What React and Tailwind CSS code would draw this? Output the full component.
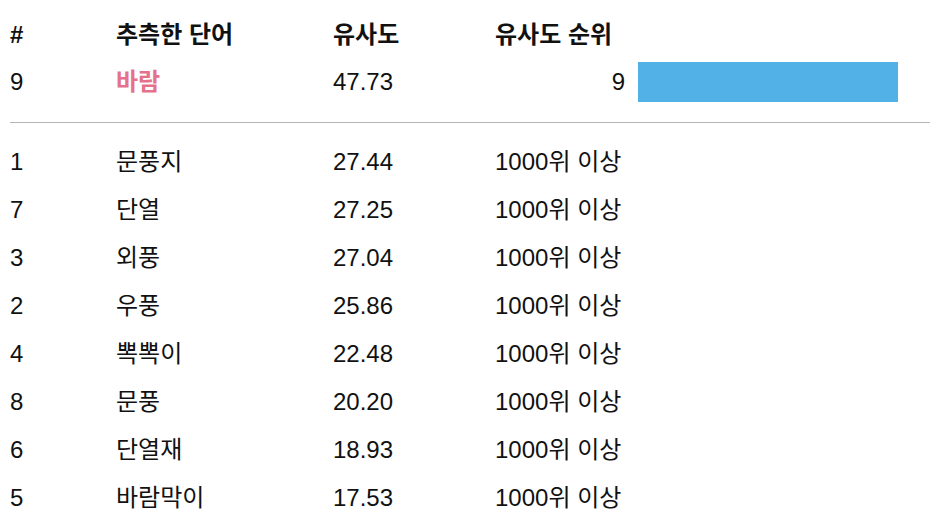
import React from 'react';

const guesses = [
  { id: 1, word: '문풍지', sim: '27.44', rank: '1000위 이상' },
  { id: 7, word: '단열', sim: '27.25', rank: '1000위 이상' },
  { id: 3, word: '외풍', sim: '27.04', rank: '1000위 이상' },
  { id: 2, word: '우풍', sim: '25.86', rank: '1000위 이상' },
  { id: 4, word: '뽁뽁이', sim: '22.48', rank: '1000위 이상' },
  { id: 8, word: '문풍', sim: '20.20', rank: '1000위 이상' },
  { id: 6, word: '단열재', sim: '18.93', rank: '1000위 이상' },
  { id: 5, word: '바람막이', sim: '17.53', rank: '1000위 이상' },
];

const cols = 'grid grid-cols-[106px_217px_162px_131px_12px_260px] items-center';

export default function App() {
  return (
    <div
      className="w-[936px] h-[526px] bg-white text-[#111] text-[24px] pl-[10px] pr-[6px] pt-[12px] overflow-hidden"
      style={{ fontFamily: '"Liberation Sans", "Noto Sans CJK KR", sans-serif' }}
    >
      {/* header */}
      <div className={`${cols} h-[46px] font-bold`}>
        <div>#</div>
        <div>추측한 단어</div>
        <div>유사도</div>
        <div className="whitespace-nowrap">유사도 순위</div>
      </div>

      {/* latest guess */}
      <div className={`${cols} h-[48px]`}>
        <div>9</div>
        <div className="text-[#e6718a] font-bold">바람</div>
        <div>47.73</div>
        <div className="text-right pr-[1px]">9</div>
        <div />
        <div className="h-[40px] bg-[#52b2e8]" />
      </div>

      <div className="mt-[16px] h-px bg-[#b5b5b5]" />

      <div className="mt-[15px]">
        {guesses.map((g) => (
          <div key={g.id} className={`${cols} h-[48px]`}>
            <div>{g.id}</div>
            <div>{g.word}</div>
            <div>{g.sim}</div>
            <div className="whitespace-nowrap">{g.rank}</div>
          </div>
        ))}
      </div>
    </div>
  );
}
